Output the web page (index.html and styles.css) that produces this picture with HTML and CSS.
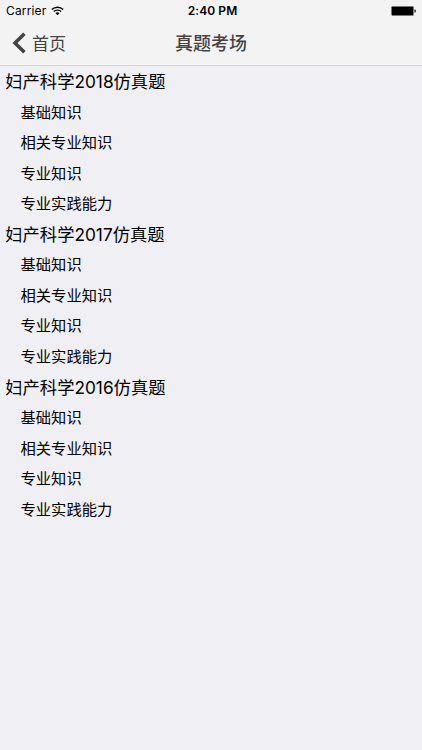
FILE: index.html
```html
<!DOCTYPE html>
<html lang="zh-CN">
<head>
<meta charset="utf-8">
<title>真题考场</title>
<link rel="stylesheet" href="styles.css">
</head>
<body>
<header class="top">
  <div class="status">
    <div class="carrier"><span>Carrier</span>
      <svg class="wifi" width="13" height="10" viewBox="0 0 13 10"><path d="M.8 3.5a8.2 8.2 0 0 1 11.4 0M2.8 5.6a5.3 5.3 0 0 1 7.4 0" fill="none" stroke="#000" stroke-width="1.4"/><path d="M4.5 7.3a2.9 2.9 0 0 1 4 0l-2 2z"/></svg>
    </div>
    <div class="time">2:40 PM</div>
    <svg class="battery" width="26" height="10" viewBox="0 0 26 10"><rect x=".5" y=".5" width="22" height="9" rx="1" stroke="#777" stroke-width=".6"/><path d="M23.3 3.4h.9q.9.3.9 1.6t-.9 1.6h-.9z" fill="#444"/></svg>
  </div>
  <nav class="nav">
    <a class="back"><svg width="14" height="22" viewBox="0 0 14 22"><path d="M12.4 1.7 3 11l9.4 9.3" fill="none" stroke="#444" stroke-width="3.6"/></svg><span>首页</span></a>
    <h1 class="title">真题考场</h1>
  </nav>
</header>
<main class="list">
  <section><h2>妇产科学2018仿真题</h2><ul><li>基础知识</li><li>相关专业知识</li><li>专业知识</li><li>专业实践能力</li></ul></section>
  <section><h2>妇产科学2017仿真题</h2><ul><li>基础知识</li><li>相关专业知识</li><li>专业知识</li><li>专业实践能力</li></ul></section>
  <section><h2>妇产科学2016仿真题</h2><ul><li>基础知识</li><li>相关专业知识</li><li>专业知识</li><li>专业实践能力</li></ul></section>
</main>
</body>
</html>
```
FILE: styles.css
```css
* { box-sizing: border-box; margin: 0; padding: 0; }
body { width: 422px; height: 750px; overflow: hidden; background: #efeff4; color: #000; font-family: Inter, "Noto Sans CJK SC", sans-serif; }
.top { height: 66px; background: #f3f3f3; border-bottom: 1px solid #d3d2dc; }
.status { height: 21px; padding: 0 5px 0 6px; display: grid; grid-template-columns: 1fr auto 1fr; align-items: center; font-size: 12px; line-height: 21px; }
.carrier { display: flex; align-items: center; gap: 5px; letter-spacing: .15px; }
.time { padding-left: 2px; font-weight: 600; letter-spacing: .1px; }
.battery { justify-self: end; }
.nav { height: 44px; display: grid; grid-template-columns: 1fr auto 1fr; align-items: center; color: #444; }
.back { display: flex; align-items: center; gap: 6px; padding-left: 12px; font-size: 17px; line-height: 24px; }
.back span { padding-top: 1px; }
.title { padding-top: 2px; font-size: 18px; line-height: 24px; font-weight: 500; }
.list { padding-top: 1px; }
.list h2 { height: 30.6px; line-height: 30.6px; padding-left: 5.3px; font-size: 17.3px; font-weight: 400; }
.list ul { list-style: none; padding-left: 20.5px; }
.list li { height: 30.55px; line-height: 30.55px; font-size: 15.3px; }
```
